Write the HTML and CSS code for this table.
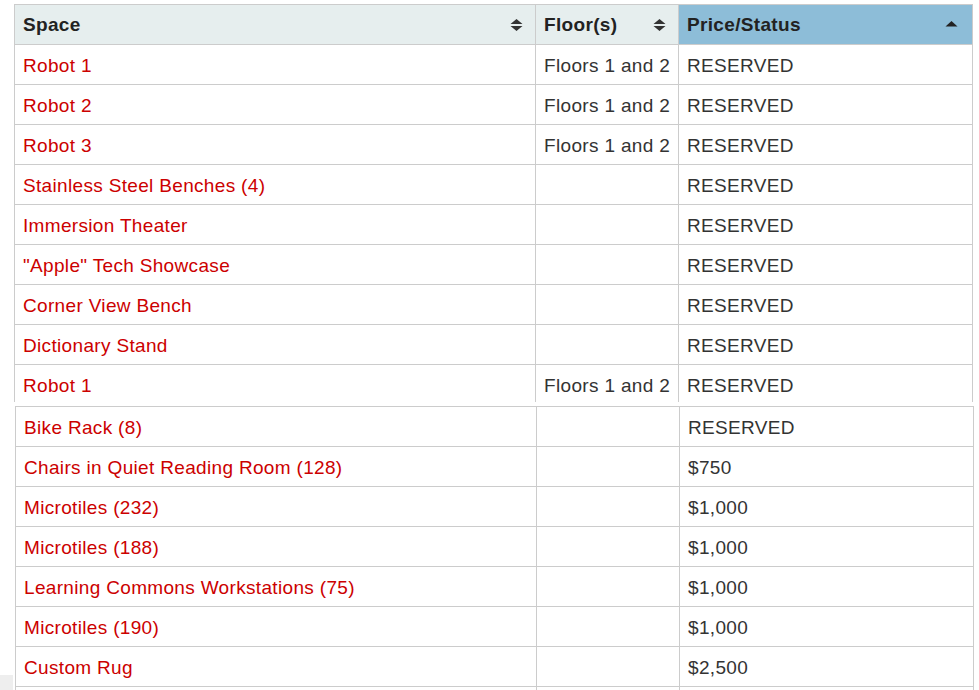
FILE: index.html
```html
<!DOCTYPE html>
<html lang="en">
<head>
<meta charset="utf-8">
<title>Naming Opportunities</title>
<link rel="stylesheet" href="styles.css">
</head>
<body>
<div class="page">
  <table class="spaces first">
    <colgroup><col class="c-space"><col class="c-floor"><col class="c-price"></colgroup>
    <thead>
      <tr>
        <th><div class="th-in"><span>Space</span><svg class="sort" width="13" height="14" viewBox="0 0 13 14"><path d="M6.5 1 L12.5 6 H0.5 Z M6.5 13 L12.5 8 H0.5 Z" fill="#333"/></svg></div></th>
        <th><div class="th-in"><span>Floor(s)</span><svg class="sort" width="13" height="14" viewBox="0 0 13 14"><path d="M6.5 1 L12.5 6 H0.5 Z M6.5 13 L12.5 8 H0.5 Z" fill="#333"/></svg></div></th>
        <th class="sorted"><div class="th-in"><span>Price/Status</span><svg class="sort asc" width="13" height="8" viewBox="0 0 13 8"><path d="M6.5 1 L12.5 6.5 H0.5 Z" fill="#222"/></svg></div></th>
      </tr>
    </thead>
    <tbody>
      <tr><td><a href="#">Robot 1</a></td><td>Floors 1 and 2</td><td>RESERVED</td></tr>
      <tr><td><a href="#">Robot 2</a></td><td>Floors 1 and 2</td><td>RESERVED</td></tr>
      <tr><td><a href="#">Robot 3</a></td><td>Floors 1 and 2</td><td>RESERVED</td></tr>
      <tr><td><a href="#">Stainless Steel Benches (4)</a></td><td></td><td>RESERVED</td></tr>
      <tr><td><a href="#">Immersion Theater</a></td><td></td><td>RESERVED</td></tr>
      <tr><td><a href="#">"Apple" Tech Showcase</a></td><td></td><td>RESERVED</td></tr>
      <tr><td><a href="#">Corner View Bench</a></td><td></td><td>RESERVED</td></tr>
      <tr><td><a href="#">Dictionary Stand</a></td><td></td><td>RESERVED</td></tr>
      <tr class="last"><td><a href="#">Robot 1</a></td><td>Floors 1 and 2</td><td>RESERVED</td></tr>
    </tbody>
  </table>
  <table class="spaces second">
    <colgroup><col class="c-space"><col class="c-floor"><col class="c-price"></colgroup>
    <tbody>
      <tr><td><a href="#">Bike Rack (8)</a></td><td></td><td>RESERVED</td></tr>
      <tr><td><a href="#">Chairs in Quiet Reading Room (128)</a></td><td></td><td>$750</td></tr>
      <tr><td><a href="#">Microtiles (232)</a></td><td></td><td>$1,000</td></tr>
      <tr><td><a href="#">Microtiles (188)</a></td><td></td><td>$1,000</td></tr>
      <tr><td><a href="#">Learning Commons Workstations (75)</a></td><td></td><td>$1,000</td></tr>
      <tr><td><a href="#">Microtiles (190)</a></td><td></td><td>$1,000</td></tr>
      <tr><td><a href="#">Custom Rug</a></td><td></td><td>$2,500</td></tr>
      <tr class="empty"><td></td><td></td><td></td></tr>
    </tbody>
  </table>
  <div class="edge-box"></div>
</div>
</body>
</html>
```
FILE: styles.css
```css
html, body {
  margin: 0;
  padding: 0;
  background: #fff;
}
body {
  font-family: "Liberation Sans", Arial, sans-serif;
  font-size: 19px;
  letter-spacing: 0.33px;
  color: #333;
  overflow: hidden;
}
.page {
  position: relative;
  height: 690px;
  overflow: hidden;
}
.spaces {
  border-collapse: collapse;
  table-layout: fixed;
  width: 958px;
}
.spaces.first {
  margin: 4px 0 0 14px;
}
.spaces.second {
  margin: 4px 0 0 15px;
}
.c-space { width: 521px; }
.c-floor { width: 143px; }
.c-price { width: 294px; }
.spaces th,
.spaces td {
  border: 1px solid #ccc;
  padding: 9px 8px 7px;
  line-height: 23px;
  height: 23px;
  text-align: left;
  vertical-align: middle;
  white-space: nowrap;
}
.spaces th {
  background: #e6eeee;
  color: #222;
  font-weight: bold;
  padding: 8px 8px;
}
.spaces th.sorted {
  background: #8dbdd8;
}
.th-in {
  display: flex;
  align-items: center;
  justify-content: space-between;
}
.sort {
  display: block;
  margin-right: 4px;
}
.sort.asc {
  margin-right: 6px;
  margin-top: -2px;
}
.spaces a {
  color: #cc0000;
  text-decoration: none;
}
.spaces tr.last td {
  border-bottom: none;
  padding-bottom: 5px;
}
.edge-box {
  position: absolute;
  left: 0;
  top: 675px;
  width: 13px;
  height: 20px;
  background: #eeeeee;
}
```
